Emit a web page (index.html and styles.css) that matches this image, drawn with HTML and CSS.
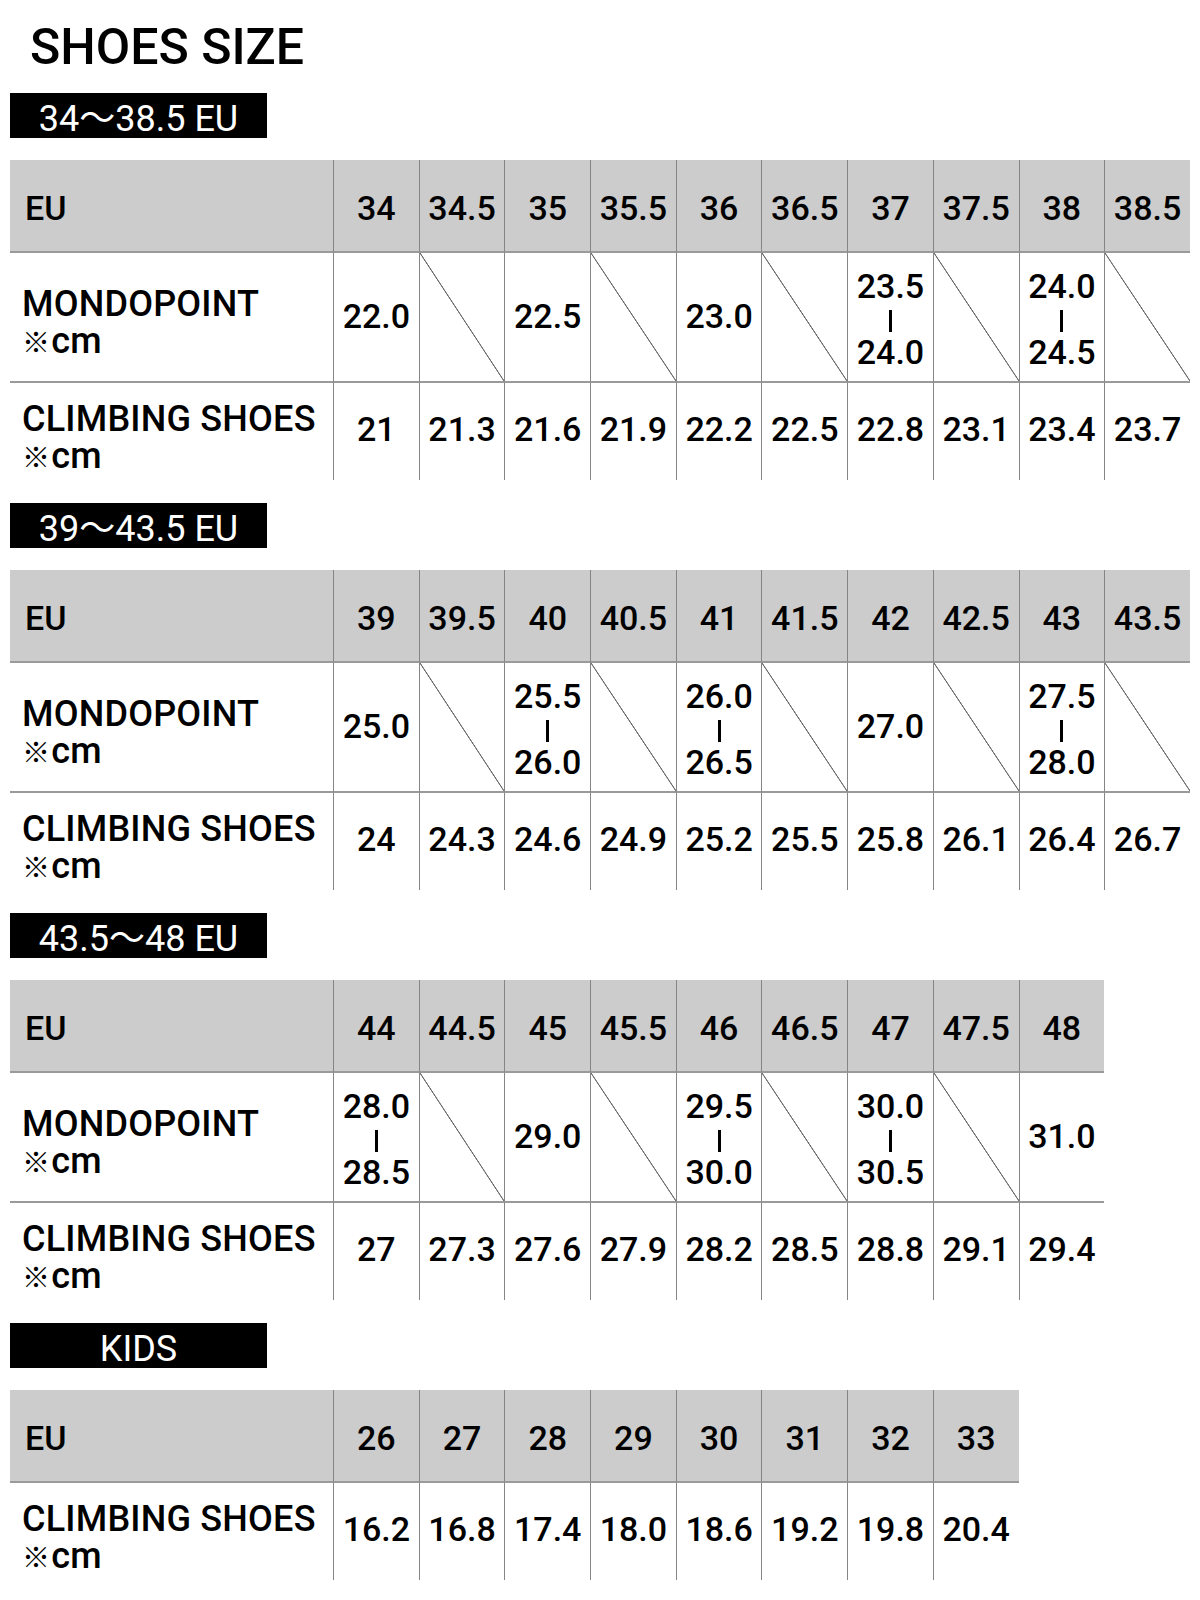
FILE: index.html
```html
<!DOCTYPE html>
<html lang="ja">
<head>
<meta charset="utf-8">
<title>SHOES SIZE</title>
<link rel="stylesheet" href="styles.css">
</head>
<body>
<div class="page">
  <h1 class="title">SHOES SIZE</h1>

  <section class="section">
    <div class="tag">34〜38.5 EU</div>
    <div class="chart cols-10">
      <div class="cell head label">EU</div>
      <div class="cell head">34</div><div class="cell head">34.5</div><div class="cell head">35</div><div class="cell head">35.5</div><div class="cell head">36</div><div class="cell head">36.5</div><div class="cell head">37</div><div class="cell head">37.5</div><div class="cell head">38</div><div class="cell head">38.5</div>

      <div class="cell mondo label"><span class="line">MONDOPOINT</span><span class="line"><span class="mark">※</span>cm</span></div>
      <div class="cell mondo">22.0</div>
      <div class="cell mondo diag"></div>
      <div class="cell mondo">22.5</div>
      <div class="cell mondo diag"></div>
      <div class="cell mondo">23.0</div>
      <div class="cell mondo diag"></div>
      <div class="cell mondo range"><span>23.5</span><i class="bar"></i><span>24.0</span></div>
      <div class="cell mondo diag"></div>
      <div class="cell mondo range"><span>24.0</span><i class="bar"></i><span>24.5</span></div>
      <div class="cell mondo diag"></div>

      <div class="cell climb label"><span class="line">CLIMBING SHOES</span><span class="line"><span class="mark">※</span>cm</span></div>
      <div class="cell climb">21</div><div class="cell climb">21.3</div><div class="cell climb">21.6</div><div class="cell climb">21.9</div><div class="cell climb">22.2</div><div class="cell climb">22.5</div><div class="cell climb">22.8</div><div class="cell climb">23.1</div><div class="cell climb">23.4</div><div class="cell climb">23.7</div>
    </div>
  </section>

  <section class="section">
    <div class="tag">39〜43.5 EU</div>
    <div class="chart cols-10">
      <div class="cell head label">EU</div>
      <div class="cell head">39</div><div class="cell head">39.5</div><div class="cell head">40</div><div class="cell head">40.5</div><div class="cell head">41</div><div class="cell head">41.5</div><div class="cell head">42</div><div class="cell head">42.5</div><div class="cell head">43</div><div class="cell head">43.5</div>

      <div class="cell mondo label"><span class="line">MONDOPOINT</span><span class="line"><span class="mark">※</span>cm</span></div>
      <div class="cell mondo">25.0</div>
      <div class="cell mondo diag"></div>
      <div class="cell mondo range"><span>25.5</span><i class="bar"></i><span>26.0</span></div>
      <div class="cell mondo diag"></div>
      <div class="cell mondo range"><span>26.0</span><i class="bar"></i><span>26.5</span></div>
      <div class="cell mondo diag"></div>
      <div class="cell mondo">27.0</div>
      <div class="cell mondo diag"></div>
      <div class="cell mondo range"><span>27.5</span><i class="bar"></i><span>28.0</span></div>
      <div class="cell mondo diag"></div>

      <div class="cell climb label"><span class="line">CLIMBING SHOES</span><span class="line"><span class="mark">※</span>cm</span></div>
      <div class="cell climb">24</div><div class="cell climb">24.3</div><div class="cell climb">24.6</div><div class="cell climb">24.9</div><div class="cell climb">25.2</div><div class="cell climb">25.5</div><div class="cell climb">25.8</div><div class="cell climb">26.1</div><div class="cell climb">26.4</div><div class="cell climb">26.7</div>
    </div>
  </section>

  <section class="section">
    <div class="tag">43.5〜48 EU</div>
    <div class="chart cols-9">
      <div class="cell head label">EU</div>
      <div class="cell head">44</div><div class="cell head">44.5</div><div class="cell head">45</div><div class="cell head">45.5</div><div class="cell head">46</div><div class="cell head">46.5</div><div class="cell head">47</div><div class="cell head">47.5</div><div class="cell head">48</div>

      <div class="cell mondo label"><span class="line">MONDOPOINT</span><span class="line"><span class="mark">※</span>cm</span></div>
      <div class="cell mondo range"><span>28.0</span><i class="bar"></i><span>28.5</span></div>
      <div class="cell mondo diag"></div>
      <div class="cell mondo">29.0</div>
      <div class="cell mondo diag"></div>
      <div class="cell mondo range"><span>29.5</span><i class="bar"></i><span>30.0</span></div>
      <div class="cell mondo diag"></div>
      <div class="cell mondo range"><span>30.0</span><i class="bar"></i><span>30.5</span></div>
      <div class="cell mondo diag"></div>
      <div class="cell mondo">31.0</div>

      <div class="cell climb label"><span class="line">CLIMBING SHOES</span><span class="line"><span class="mark">※</span>cm</span></div>
      <div class="cell climb">27</div><div class="cell climb">27.3</div><div class="cell climb">27.6</div><div class="cell climb">27.9</div><div class="cell climb">28.2</div><div class="cell climb">28.5</div><div class="cell climb">28.8</div><div class="cell climb">29.1</div><div class="cell climb">29.4</div>
    </div>
  </section>

  <section class="section">
    <div class="tag">KIDS</div>
    <div class="chart cols-8">
      <div class="cell head label">EU</div>
      <div class="cell head">26</div><div class="cell head">27</div><div class="cell head">28</div><div class="cell head">29</div><div class="cell head">30</div><div class="cell head">31</div><div class="cell head">32</div><div class="cell head">33</div>

      <div class="cell climb label"><span class="line">CLIMBING SHOES</span><span class="line"><span class="mark">※</span>cm</span></div>
      <div class="cell climb">16.2</div><div class="cell climb">16.8</div><div class="cell climb">17.4</div><div class="cell climb">18.0</div><div class="cell climb">18.6</div><div class="cell climb">19.2</div><div class="cell climb">19.8</div><div class="cell climb">20.4</div>
    </div>
  </section>
</div>
</body>
</html>
```

FILE: styles.css
```css
* {
  box-sizing: border-box;
}

html, body {
  margin: 0;
  padding: 0;
  background: #ffffff;
}

body {
  font-family: Roboto, "Noto Sans CJK JP", "Liberation Sans", sans-serif;
  color: #000000;
}

.page {
  padding: 17px 10px 0 10px;
  width: 1200px;
}

.title {
  margin: 0 0 16px 20px;
  font-size: 50px;
  line-height: 60px;
  font-weight: 500;
  letter-spacing: 0;
}

.section {
  margin-bottom: 23px;
}

.tag {
  width: 257px;
  height: 45px;
  background: #000000;
  color: #ffffff;
  font-size: 36px;
  line-height: 45px;
  padding-top: 4px;
  text-align: center;
  margin-bottom: 22px;
  white-space: nowrap;
}

.chart {
  display: grid;
  grid-auto-rows: auto;
  font-weight: 500;
}

.cols-10 {
  grid-template-columns: 323px repeat(10, 85.7px);
}

.cols-9 {
  grid-template-columns: 323px repeat(9, 85.7px);
}

.cols-8 {
  grid-template-columns: 323px repeat(8, 85.7px);
}

.cell {
  display: flex;
  align-items: center;
  justify-content: center;
  font-size: 34px;
  line-height: 34px;
  border-left: 1px solid #858585;
  white-space: nowrap;
}

.cell.label {
  border-left: none;
  flex-direction: column;
  align-items: flex-start;
  justify-content: center;
  padding-left: 12px;
}

.head {
  height: 93px;
  background: #cccccc;
  border-bottom: 2px solid #9a9a9a;
  padding-top: 5px;
}

.head.label {
  padding-left: 15px;
  padding-top: 4px;
}

.mondo {
  height: 130px;
  border-bottom: 2px solid #9a9a9a;
  padding-bottom: 3px;
}

.climb {
  height: 97px;
  padding-bottom: 5px;
}

.mondo.label,
.climb.label {
  font-size: 36px;
  line-height: 37px;
  letter-spacing: 0.2px;
  padding-top: 12px;
  padding-bottom: 0;
}

.line {
  display: block;
  height: 37px;
  line-height: 37px;
}

.mark {
  font-size: 28px;
  line-height: 0;
  font-weight: 400;
  margin-right: 1px;
}

.range {
  flex-direction: column;
  padding-top: 4px;
  padding-bottom: 0;
}

.range span {
  display: block;
  height: 34px;
  line-height: 34px;
}

.bar {
  display: block;
  width: 3px;
  height: 22px;
  background: #000000;
  margin: 7px 0 3px 0;
}

.diag {
  background: linear-gradient(to top right,
    transparent calc(50% - 0.8px),
    #6f6f6f calc(50% - 0.3px),
    #6f6f6f calc(50% + 0.3px),
    transparent calc(50% + 0.8px));
}
```
